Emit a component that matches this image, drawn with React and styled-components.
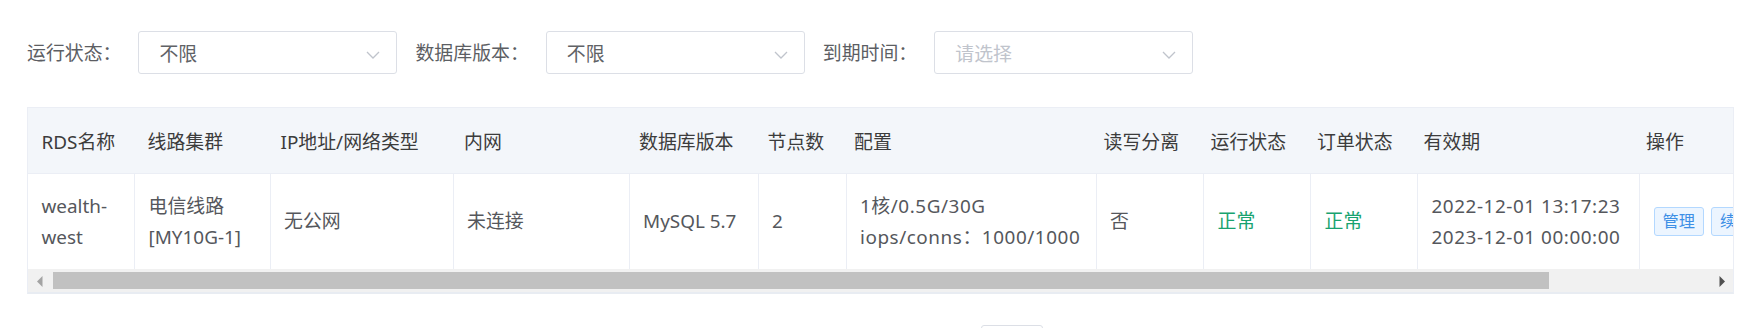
import React from 'react';
import styled, { createGlobalStyle } from 'styled-components';

const GlobalStyle = createGlobalStyle`
  html, body {
    margin: 0;
    padding: 0;
    background: #fff;
  }
  body {
    font-family: "Noto Sans", "Noto Sans CJK SC", sans-serif;
  }
`;

const Page = styled.div`
  box-sizing: border-box;
  height: 328px;
  overflow: hidden;
  padding: 31px 18px 0 27px;
  font-size: 18.9px;
  color: #606266;
`;

const FilterBar = styled.div`
  display: flex;
  align-items: center;
`;

const FilterItem = styled.div`
  display: flex;
  align-items: center;
  margin-right: 18px;
`;

const FilterLabel = styled.span`
  color: #5c5e63;
  margin-right: 17px;
  margin-top: -2px;
  white-space: nowrap;
`;

const Select = styled.div`
  box-sizing: border-box;
  width: 259px;
  height: 43px;
  display: flex;
  align-items: center;
  justify-content: space-between;
  padding: 0 16px 0 20px;
  border: 1px solid #dcdfe6;
  border-radius: 3px;
  color: ${p => (p.$placeholder ? '#c0c4cc' : '#606266')};

  svg {
    margin-top: 5px;
  }
`;

const TableWrap = styled.div`
  margin-top: 33px;
  border: 1px solid #ebeef5;
  border-bottom: 2px solid #e8ecf2;
  overflow: hidden;
`;

const HeadRow = styled.div`
  display: grid;
  grid-template-columns: ${p => p.$cols};
  width: max-content;
  min-width: 100%;
  background: #f3f6fa;
  border-bottom: 1px solid #ebeef5;
`;

const HeadCell = styled.div`
  box-sizing: border-box;
  height: 65px;
  display: flex;
  align-items: center;
  padding: 0 13.5px;
  color: #3c3c3c;
  white-space: nowrap;
`;

const BodyRow = styled.div`
  display: grid;
  grid-template-columns: ${p => p.$cols};
  width: max-content;
`;

const Cell = styled.div`
  box-sizing: border-box;
  height: 95px;
  display: flex;
  flex-direction: ${p => (p.$actions ? 'row' : 'column')};
  justify-content: ${p => (p.$actions ? 'flex-start' : 'center')};
  align-items: ${p => (p.$actions ? 'center' : 'stretch')};
  gap: ${p => (p.$actions ? '7px' : '0')};
  padding: 0 13.5px;
  border-right: 1px solid #ebeef5;
  line-height: 31px;
  white-space: nowrap;
  letter-spacing: ${p => (p.$numeric ? '0.55px' : 'normal')};
  color: ${p => (p.$ok ? '#18a36f' : '#55575c')};
`;

const ActionButton = styled.button`
  box-sizing: border-box;
  height: 29px;
  padding: 0 8px;
  border: 1px solid #b3d8ff;
  border-radius: 3px;
  background: #ecf5ff;
  color: #3d8fe6;
  font-family: inherit;
  font-size: 16.2px;
  line-height: 27px;
  white-space: nowrap;
  cursor: pointer;
`;

const ScrollBar = styled.div`
  display: flex;
  height: 23px;
  background: #f1f1f1;
`;

const ScrollArrow = styled.div`
  flex: none;
  width: 23px;
  display: flex;
  align-items: center;
  justify-content: center;

  svg {
    margin-top: 2px;
  }
`;

const ScrollTrack = styled.div`
  flex: 1;
  display: flex;
  align-items: center;
`;

const ScrollThumb = styled.div`
  height: 17px;
  width: ${p => p.$width}px;
  margin-left: 2px;
  background: #c1c1c1;
`;

const Pager = styled.div`
  display: flex;
  margin-top: 31px;
  padding-left: 954px;
`;

const PageInput = styled.div`
  box-sizing: border-box;
  width: 62px;
  height: 38px;
  border: 1px solid #dcdfe6;
  border-radius: 3px;
`;

const Chevron = () => (
  <svg width="14" height="8" viewBox="0 0 14 8">
    <polyline points="1,1 7,7 13,1" fill="none" stroke="#c0c4cc" strokeWidth="1.3" />
  </svg>
);

const Arrow = ({ dir, color }) => (
  <svg width="6" height="11" viewBox="0 0 6 11">
    <polygon points={dir === 'left' ? '5.5,0 0,5.5 5.5,11' : '0.5,0 6,5.5 0.5,11'} fill={color} />
  </svg>
);

const filters = [
  { label: '运行状态：', value: '不限' },
  { label: '数据库版本：', value: '不限' },
  { label: '到期时间：', value: '请选择', placeholder: true },
];

const columns = [
  { title: 'RDS名称', w: 107, hw: 106 },
  { title: '线路集群', w: 135.5, hw: 133 },
  { title: 'IP地址/网络类型', w: 183, hw: 183.5 },
  { title: '内网', w: 176, hw: 175 },
  { title: '数据库版本', w: 129, hw: 128.5 },
  { title: '节点数', w: 88, hw: 86.5 },
  { title: '配置', w: 250, hw: 249.5 },
  { title: '读写分离', w: 107.5, hw: 107 },
  { title: '运行状态', w: 107, hw: 106.5 },
  { title: '订单状态', w: 107, hw: 106.5 },
  { title: '有效期', w: 222, hw: 222.5 },
  { title: '操作', w: 290, hw: 300 },
];

const row = [
  { lines: ['wealth-', 'west'] },
  { lines: ['电信线路', '[MY10G-1]'] },
  { lines: ['无公网'] },
  { lines: ['未连接'] },
  { lines: ['MySQL 5.7'] },
  { lines: ['2'] },
  { lines: ['1核/0.5G/30G', 'iops/conns：1000/1000'], numeric: true },
  { lines: ['否'] },
  { lines: ['正常'], ok: true },
  { lines: ['正常'], ok: true },
  { lines: ['2022-12-01 13:17:23', '2023-12-01 00:00:00'], numeric: true },
  { actions: ['管理', '续费', '变更配置'] },
];

const bodyCols = columns.map(c => `${c.w}px`).join(' ');
const headCols = columns.map(c => `${c.hw}px`).join(' ');

export default function App() {
  return (
    <>
      <GlobalStyle />
      <Page>
        <FilterBar>
          {filters.map(f => (
            <FilterItem key={f.label}>
              <FilterLabel>{f.label}</FilterLabel>
              <Select $placeholder={f.placeholder}>
                <span>{f.value}</span>
                <Chevron />
              </Select>
            </FilterItem>
          ))}
        </FilterBar>

        <TableWrap>
          <HeadRow $cols={headCols}>
            {columns.map(c => (
              <HeadCell key={c.title}>{c.title}</HeadCell>
            ))}
          </HeadRow>
          <BodyRow $cols={bodyCols}>
            {row.map((cell, i) =>
              cell.actions ? (
                <Cell key={i} $actions>
                  {cell.actions.map(a => (
                    <ActionButton key={a}>{a}</ActionButton>
                  ))}
                </Cell>
              ) : (
                <Cell key={i} $ok={cell.ok} $numeric={cell.numeric}>
                  {cell.lines.map(l => (
                    <div key={l}>{l}</div>
                  ))}
                </Cell>
              )
            )}
          </BodyRow>
          <ScrollBar>
            <ScrollArrow>
              <Arrow dir="left" color="#a3a3a3" />
            </ScrollArrow>
            <ScrollTrack>
              <ScrollThumb $width={1496} />
            </ScrollTrack>
            <ScrollArrow>
              <Arrow dir="right" color="#505050" />
            </ScrollArrow>
          </ScrollBar>
        </TableWrap>

        <Pager>
          <PageInput />
        </Pager>
      </Page>
    </>
  );
}
